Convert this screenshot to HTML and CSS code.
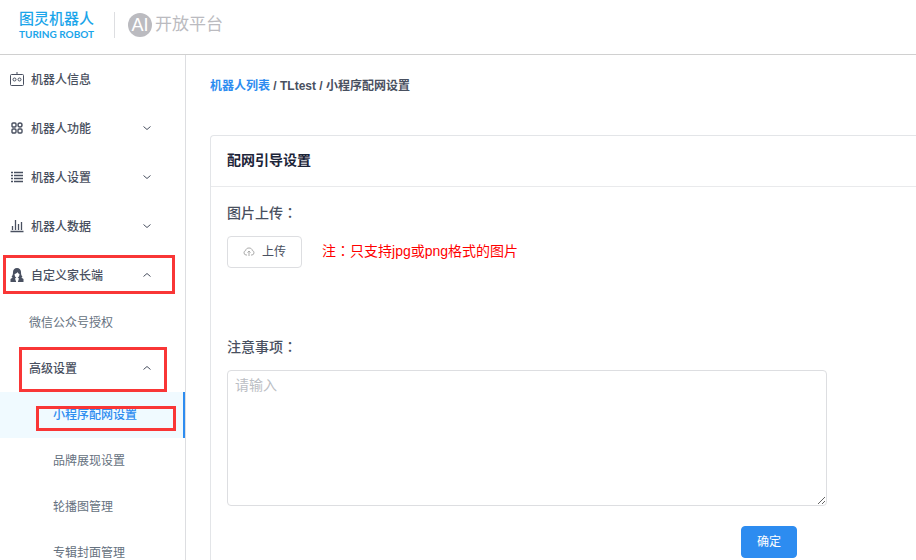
FILE: index.html
```html
<!DOCTYPE html>
<html lang="zh-CN">

<head>
  <meta charset="utf-8">
  <title>小程序配网设置</title>
  <link rel="stylesheet" href="styles.css">
</head>

<body>
  <header class="header">
    <a href="#" class="logo">
      <span class="logo-cn">图灵机器人</span>
      <span class="logo-en">TURING ROBOT</span>
    </a>
    <div class="platform">
      <span class="platform-badge">AI</span>
      <span>开放平台</span>
    </div>
  </header>

  <div class="layout">
    <nav class="sidebar">
      <a href="#" class="menu-item">
        <svg class="menu-icon" viewBox="0 0 14 14" fill="none" stroke="currentColor">
          <rect x="0.5" y="2.5" width="13" height="11" rx="1" />
          <path d="M7 0v2.500" />
          <circle cx="4.500" cy="7.500" r="1.500" />
          <circle cx="9.500" cy="7.500" r="1.500" />
        </svg>
        <span>机器人信息</span>
      </a>
      <a href="#" class="menu-item">
        <svg class="menu-icon" viewBox="0 0 14 14" fill="none" stroke="currentColor" stroke-width="1.400">
          <rect x="2" y="2" width="4" height="4" rx="1" />
          <rect x="8" y="2" width="4" height="4" rx="2" />
          <rect x="2" y="8" width="4" height="4" rx="1" />
          <rect x="8" y="8" width="4" height="4" rx="1" />
        </svg>
        <span>机器人功能</span>
        <svg class="arrow" viewBox="0 0 8 8"><path d="M0.500 2.500L4 5.500L7.500 2.500" /></svg>
      </a>
      <a href="#" class="menu-item">
        <svg class="menu-icon" viewBox="0 0 14 14" fill="none" stroke="currentColor" stroke-width="1.300">
          <path d="M1 2.500h2M4 2.500h9M1 5.500h2M4 5.500h9M1 8.500h2M4 8.500h9M1 11.500h2M4 11.500h9" />
        </svg>
        <span>机器人设置</span>
        <svg class="arrow" viewBox="0 0 8 8"><path d="M0.500 2.500L4 5.500L7.500 2.500" /></svg>
      </a>
      <a href="#" class="menu-item">
        <svg class="menu-icon" viewBox="0 0 14 14" fill="none" stroke="currentColor" stroke-width="1.300">
          <path d="M0.500 12.500h13M2.500 7v4M5.500 1v10M8.500 5v6M11.500 3v8" />
        </svg>
        <span>机器人数据</span>
        <svg class="arrow" viewBox="0 0 8 8"><path d="M0.500 2.500L4 5.500L7.500 2.500" /></svg>
      </a>
      <a href="#" class="menu-item mark mark-parent">
        <svg class="menu-icon" viewBox="0 0 14 14" fill="currentColor">
          <path fill-rule="evenodd" d="M7 0C4.500 0 3 1.700 3 4c0 2-.3 3.500-1.500 5l1.200.6L.5 11v3h5.700L5 10.500l1.300-.8C5 9 4.600 7.500 4.600 6 6 5.700 7 5 7.500 4c.4 1 1 1.600 2 2 0 1.500-.6 3-1.800 3.700l1.300.8L7.800 14h5.700v-3l-2.200-1.400 1.200-.6C11.300 7.500 11 6 11 4c0-2.300-1.500-4-4-4z" />
        </svg>
        <span>自定义家长端</span>
        <svg class="arrow" viewBox="0 0 8 8"><path d="M0.500 5.500L4 2.500L7.500 5.500" /></svg>
      </a>
      <a href="#" class="sub-item">微信公众号授权</a>
      <a href="#" class="sub-item sub-title mark mark-advanced">
        <span>高级设置</span>
        <svg class="arrow" viewBox="0 0 8 8"><path d="M0.500 5.500L4 2.500L7.500 5.500" /></svg>
      </a>
      <a href="#" class="sub-item child active mark mark-current">小程序配网设置</a>
      <a href="#" class="sub-item child">品牌展现设置</a>
      <a href="#" class="sub-item child">轮播图管理</a>
      <a href="#" class="sub-item child">专辑封面管理</a>
    </nav>

    <main class="content">
      <div class="breadcrumb">
        <a href="#">机器人列表</a> / TLtest / 小程序配网设置
      </div>

      <section class="card">
        <h2 class="card-head">配网引导设置</h2>
        <form class="card-body">
          <div class="form-label" id="upload-label">图片上传<span class="colon" lang="zh-TW">&#xFF1A;</span></div>
          <div class="upload-row">
            <button type="button" class="btn" aria-describedby="upload-label">
              <svg class="upload-icon" viewBox="0 0 12 12" fill="none" stroke="currentColor">
                <path d="M4 9H3a2.300 2.300 0 0 1-.3-4.500C3 2.700 4.300 2 6 2s3 .7 3.300 2.500A2.300 2.300 0 0 1 9 9H8M6 10V5M4.500 6.500L6 5l1.500 1.500" />
              </svg>
              <span>上传</span>
            </button>
            <span class="tip">注<span class="colon" lang="zh-TW">&#xFF1A;</span>只支持jpg或png格式的图片</span>
          </div>
          <label class="form-label" for="notice">注意事项<span class="colon" lang="zh-TW">&#xFF1A;</span></label>
          <textarea id="notice" class="textarea" placeholder="请输入"></textarea>
          <div class="form-footer">
            <button type="submit" class="btn btn-primary">确定</button>
          </div>
        </form>
      </section>
    </main>
  </div>
</body>

</html>
```

FILE: styles.css
```css
* {
  box-sizing: border-box;
}

body {
  display: flex;
  flex-direction: column;
  height: 100vh;
  margin: 0;
  overflow: hidden;
  background-color: #ffffff;
  color: #495060;
  font-family: "Liberation Sans", "Noto Sans CJK SC", sans-serif;
  font-size: 12px;
}

a {
  color: inherit;
  text-decoration: none;
}

.header {
  display: flex;
  flex: none;
  align-items: center;
  height: 55px;
  padding: 0 19px 4px;
  border-bottom: 1px solid #d0d0d0;
}

.logo {
  display: flex;
  flex-direction: column;
  color: #1ba5ea;
  white-space: nowrap;
}

.logo-cn {
  font-size: 15px;
  font-weight: 500;
  line-height: 18px;
}

.logo-en {
  font-family: Lato, sans-serif;
  font-size: 10px;
  font-weight: bold;
  line-height: 12px;
}

.platform {
  display: flex;
  align-items: center;
  gap: 3px;
  height: 26px;
  margin-left: 20px;
  padding-left: 13px;
  border-left: 1px solid #dddee1;
  color: #bbbbc0;
  font-size: 17px;
  line-height: 24px;
}

.platform-badge {
  width: 24px;
  height: 24px;
  border-radius: 50%;
  background-color: #bbbbc0;
  color: #ffffff;
  font-size: 18px;
  text-align: center;
}

.layout {
  display: flex;
  flex: 1;
  min-height: 0;
}

.sidebar {
  flex: none;
  width: 186px;
  overflow: hidden;
  border-right: 1px solid #dddee1;
}

.menu-item,
.sub-item {
  display: flex;
  position: relative;
  align-items: center;
}

.menu-item {
  height: 49px;
  padding: 0 34px 2px 10px;
  font-weight: 500;
}

.menu-icon {
  width: 14px;
  height: 14px;
  margin-right: 7px;
}

.arrow {
  width: 8px;
  height: 8px;
  margin-left: auto;
  fill: none;
  stroke: currentColor;
}

.sub-item {
  height: 46px;
  padding: 0 34px 3px 29px;
  color: #657180;
}

.sub-title {
  color: #495060;
  font-weight: 500;
}

.child {
  padding-left: 53px;
}

.active {
  border-right: 2px solid #2d8cf0;
  background-color: #f0faff;
  color: #2d8cf0;
  font-weight: 500;
}

/* red frames round the steps to follow */
.mark::after {
  position: absolute;
  border: 3px solid #f93636;
  content: "";
}

.mark-parent::after {
  inset: 4px 10px 6px 3px;
}

.mark-advanced::after {
  inset: 1px 18px 0 19px;
}

.mark-current::after {
  inset: 14px 7px 7px 36px;
}

.content {
  flex: 1;
  min-width: 0;
  padding: 21px 0 0 24px;
}

.breadcrumb {
  height: 20px;
  margin-bottom: 39px;
  font-weight: bold;
  line-height: 20px;
}

.breadcrumb a {
  color: #2d8cf0;
}

.card {
  border: 1px solid #e3e5e8;
  border-right: none;
  border-radius: 4px 0 0 4px;
}

.card-head {
  height: 51px;
  margin: 0;
  padding: 0 16px;
  border-bottom: 1px solid #e9eaec;
  color: #1c2438;
  font-size: 14px;
  font-weight: bold;
  line-height: 48px;
}

.card-body {
  padding: 15px 16px;
}

.form-label {
  display: block;
  height: 20px;
  margin-bottom: 14px;
  font-size: 14px;
  font-weight: 500;
  line-height: 20px;
}

.colon {
  font-family: "Noto Sans CJK TC", sans-serif;
}

.upload-row {
  display: flex;
  align-items: flex-start;
  gap: 20px;
  margin-bottom: 68px;
}

.btn {
  display: flex;
  align-items: center;
  gap: 7px;
  height: 32px;
  padding: 0 15px;
  border: 1px solid #dddee1;
  border-radius: 4px;
  background-color: #ffffff;
  color: #495060;
  font-family: inherit;
  font-size: 12px;
  line-height: 16px;
  cursor: pointer;
}

.btn-primary {
  border-color: #2d8cf0;
  background-color: #2d8cf0;
  color: #ffffff;
}

.upload-icon {
  width: 12px;
  height: 12px;
  color: #aaaaaa;
}

.tip {
  color: #ff0000;
  font-size: 14px;
  line-height: 28px;
}

.textarea {
  display: block;
  width: 100%;
  max-width: 600px;
  height: 136px;
  padding: 4px 7px;
  border: 1px solid #dddee1;
  border-radius: 4px;
  color: #495060;
  font-family: inherit;
  font-size: 14px;
  line-height: 20px;
}

.textarea::placeholder {
  color: #bbbec4;
}

.form-footer {
  display: flex;
  justify-content: flex-end;
  max-width: 600px;
  padding: 20px 30px 0 0;
}
```
